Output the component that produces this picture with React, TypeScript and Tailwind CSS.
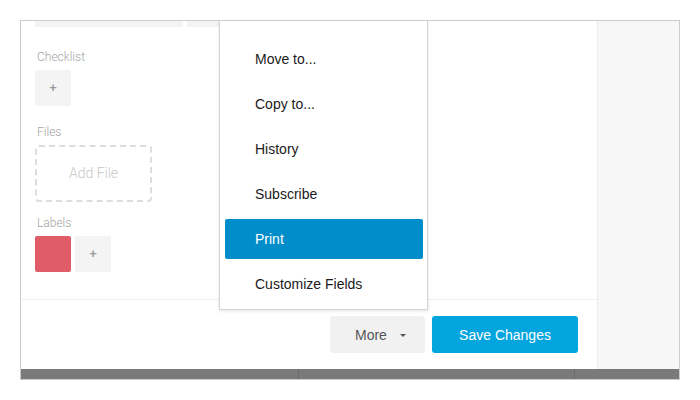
import React from "react";

const menuItems = ["Move to...", "Copy to...", "History", "Subscribe", "Print", "Customize Fields"];

function Label({ children }: { children: React.ReactNode }) {
  return (
    <div className="pl-[2px] font-['Roboto',sans-serif] text-[12px] font-light leading-[14px] text-[#a4a4a4]">{children}</div>
  );
}

function PlusBox() {
  return (
    <div className="flex h-9 w-9 items-center justify-center rounded-[2px] bg-[#f4f4f4] font-['Liberation_Sans',sans-serif] text-[13px] font-bold text-[#9a9a9a]">
      +
    </div>
  );
}

export default function App() {
  return (
    <div className="h-[400px] w-[700px] bg-white pl-5 pt-5 font-['Liberation_Sans',Arial,sans-serif]">
      <div className="relative flex h-[360px] w-[660px] flex-col overflow-hidden border border-[#cccccc]">
        <div className="flex h-[348px]">
          {/* main card */}
          <div className="flex w-[576px] flex-col">
            <div className="h-[278px] px-[14px]">
              <div className="flex gap-1">
                <div className="h-[6px] w-[148px] bg-[#f4f4f4]" />
                <div className="h-[6px] w-[60px] bg-[#f4f4f4]" />
              </div>
              <div className="mt-[23px]">
                <Label>Checklist</Label>
                <div className="mt-[6px]">
                  <PlusBox />
                </div>
              </div>
              <div className="mt-[19px]">
                <Label>Files</Label>
                <div className="mt-[6px] flex h-[57px] w-[117px] items-center justify-center rounded-[4px] border-2 border-dashed border-[#dddddd] font-['Roboto',sans-serif] text-[14px] font-light text-[#c8c8c8]">
                  Add File
                </div>
              </div>
              <div className="mt-[14px]">
                <Label>Labels</Label>
                <div className="mt-[6px] flex gap-1">
                  <div className="h-9 w-9 rounded-[2px] bg-[#e05c66]" />
                  <PlusBox />
                </div>
              </div>
            </div>
            <div className="flex flex-1 items-start justify-end gap-[7px] border-t border-[#eeeeee] pr-[19px] pt-4">
              <button className="flex h-[37px] w-[95px] items-center rounded-[3px] bg-[#f1f1f1] pb-[-1px] pl-[25px] pt-[1px] text-[14px] text-[#555555]">
                More
                <span className="ml-[13px] h-0 w-0 border-x-[3px] border-t-[3px] border-x-transparent border-t-[#555555]" />
              </button>
              <button className="h-[37px] w-[146px] rounded-[3px] bg-[#03a5de] pt-[1px] text-[14px] text-white">
                Save Changes
              </button>
            </div>
          </div>
          {/* side panel */}
          <div className="flex-1 border-l border-[#ececec] bg-[#f7f7f7]" />
        </div>
        <div className="flex h-[10px] bg-[#7a7a7a]">
          <div className="w-[278px] border-r border-[#6a6a6a]" />
          <div className="w-[276px] border-r border-[#6a6a6a]" />
        </div>

        {/* dropdown menu */}
        <div className="absolute left-[198px] top-0 w-[209px] border border-t-0 border-[#d4d4d4] bg-white pb-[2px] pt-4 shadow-[0_1px_3px_rgba(0,0,0,0.12)]">
          {menuItems.map((item) => (
            <div key={item} className="flex h-[45px] items-center">
              <div
                className={
                  item === "Print"
                    ? "mb-[1px] ml-[5px] mr-[4px] flex h-10 flex-1 items-center rounded-[2px] bg-[#008dca] pl-[30px] text-[14px] text-white"
                    : "ml-[5px] mr-[4px] flex h-10 flex-1 items-center pl-[30px] text-[14px] text-[#1a1a1a]"
                }
              >
                {item}
              </div>
            </div>
          ))}
        </div>
      </div>
    </div>
  );
}
